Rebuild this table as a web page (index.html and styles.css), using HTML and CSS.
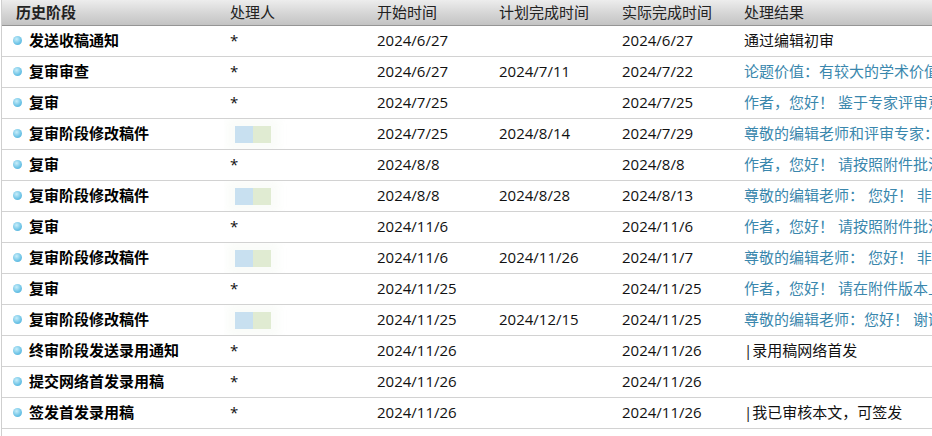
FILE: index.html
```html
<!DOCTYPE html>
<html lang="zh-CN">
<head>
    <meta charset="UTF-8">
    <title>稿件处理历史</title>
    <link rel="stylesheet" href="styles.css">
</head>
<body>
    <div class="wrap">
        <table class="history">
            <colgroup>
                <col class="c-stage">
                <col class="c-user">
                <col class="c-start">
                <col class="c-plan">
                <col class="c-done">
                <col class="c-result">
            </colgroup>
            <thead>
                <tr>
                    <th class="stage-head">历史阶段</th>
                    <th>处理人</th>
                    <th>开始时间</th>
                    <th>计划完成时间</th>
                    <th>实际完成时间</th>
                    <th>处理结果</th>
                </tr>
            </thead>
            <tbody>
                <tr>
                    <td class="stage"><span class="dot"></span>发送收稿通知</td>
                    <td>*</td>
                    <td>2024/6/27</td>
                    <td></td>
                    <td>2024/6/27</td>
                    <td>通过编辑初审</td>
                </tr>
                <tr>
                    <td class="stage"><span class="dot"></span>复审审查</td>
                    <td>*</td>
                    <td>2024/6/27</td>
                    <td>2024/7/11</td>
                    <td>2024/7/22</td>
                    <td class="note">论题价值：有较大的学术价值和现实意义</td>
                </tr>
                <tr>
                    <td class="stage"><span class="dot"></span>复审</td>
                    <td>*</td>
                    <td>2024/7/25</td>
                    <td></td>
                    <td>2024/7/25</td>
                    <td class="note">作者，您好！ 鉴于专家评审意见，请修改</td>
                </tr>
                <tr>
                    <td class="stage"><span class="dot"></span>复审阶段修改稿件</td>
                    <td><span class="masked"></span></td>
                    <td>2024/7/25</td>
                    <td>2024/8/14</td>
                    <td>2024/7/29</td>
                    <td class="note">尊敬的编辑老师和评审专家：您好</td>
                </tr>
                <tr>
                    <td class="stage"><span class="dot"></span>复审</td>
                    <td>*</td>
                    <td>2024/8/8</td>
                    <td></td>
                    <td>2024/8/8</td>
                    <td class="note">作者，您好！ 请按照附件批注修改</td>
                </tr>
                <tr>
                    <td class="stage"><span class="dot"></span>复审阶段修改稿件</td>
                    <td><span class="masked"></span></td>
                    <td>2024/8/8</td>
                    <td>2024/8/28</td>
                    <td>2024/8/13</td>
                    <td class="note">尊敬的编辑老师： 您好！ 非常感谢</td>
                </tr>
                <tr>
                    <td class="stage"><span class="dot"></span>复审</td>
                    <td>*</td>
                    <td>2024/11/6</td>
                    <td></td>
                    <td>2024/11/6</td>
                    <td class="note">作者，您好！ 请按照附件批注修改</td>
                </tr>
                <tr>
                    <td class="stage"><span class="dot"></span>复审阶段修改稿件</td>
                    <td><span class="masked"></span></td>
                    <td>2024/11/6</td>
                    <td>2024/11/26</td>
                    <td>2024/11/7</td>
                    <td class="note">尊敬的编辑老师： 您好！ 非常感谢</td>
                </tr>
                <tr>
                    <td class="stage"><span class="dot"></span>复审</td>
                    <td>*</td>
                    <td>2024/11/25</td>
                    <td></td>
                    <td>2024/11/25</td>
                    <td class="note">作者，您好！ 请在附件版本上修改</td>
                </tr>
                <tr>
                    <td class="stage"><span class="dot"></span>复审阶段修改稿件</td>
                    <td><span class="masked"></span></td>
                    <td>2024/11/25</td>
                    <td>2024/12/15</td>
                    <td>2024/11/25</td>
                    <td class="note">尊敬的编辑老师：您好！ 谢谢您</td>
                </tr>
                <tr>
                    <td class="stage"><span class="dot"></span>终审阶段发送录用通知</td>
                    <td>*</td>
                    <td>2024/11/26</td>
                    <td></td>
                    <td>2024/11/26</td>
                    <td>|录用稿网络首发</td>
                </tr>
                <tr>
                    <td class="stage"><span class="dot"></span>提交网络首发录用稿</td>
                    <td>*</td>
                    <td>2024/11/26</td>
                    <td></td>
                    <td>2024/11/26</td>
                    <td></td>
                </tr>
                <tr>
                    <td class="stage"><span class="dot"></span>签发首发录用稿</td>
                    <td>*</td>
                    <td>2024/11/26</td>
                    <td></td>
                    <td>2024/11/26</td>
                    <td>|我已审核本文，可签发</td>
                </tr>
            </tbody>
        </table>
    </div>
</body>
</html>
```

FILE: styles.css
```css
* {
    margin: 0;
    padding: 0;
    box-sizing: border-box;
}
html, body {
    height: 100%;
    overflow: hidden;
    background: #fff;
}
body {
    font-family: "Open Sans", "Noto Sans CJK SC", sans-serif;
    font-size: 15px;
    color: #111;
}
.wrap {
    height: 100%;
    border-left: 1px solid #cfcfcf;
    margin-left: 1px;
}
.history {
    border-collapse: collapse;
    table-layout: fixed;
    width: 1300px;
}
.c-stage { width: 222px; }
.c-user { width: 147px; }
.c-start { width: 122px; }
.c-plan { width: 123px; }
.c-done { width: 122px; }
.c-result { width: 564px; }
.history th {
    height: 25px;
    padding: 0 0 1px 6px;
    text-align: left;
    font-weight: normal;
    color: #222;
    line-height: 22px;
    vertical-align: middle;
    background: linear-gradient(#ededed, #d9d9d9 45%, #c3c3c3);
    border-bottom: 1px solid #959595;
}
.history th.stage-head {
    font-weight: bold;
    padding-left: 14px;
}
.history td {
    height: 31px;
    padding: 0 0 2px 6px;
    border-bottom: 1px solid #d2d2d2;
    white-space: nowrap;
    overflow: hidden;
    vertical-align: middle;
}
.history td.stage {
    font-weight: bold;
    color: #000;
    padding-left: 11px;
}
.dot {
    display: inline-block;
    width: 9px;
    height: 9px;
    margin-right: 7px;
    border-radius: 50%;
    vertical-align: 1px;
    background: radial-gradient(circle at 40% 35%, #c9eefa, #6cc3e6 60%, #4aa9d6);
}
.history td.note {
    color: #3a87ad;
}
.masked {
    display: inline-block;
    width: 36px;
    height: 17px;
    margin-left: 5px;
    vertical-align: -4px;
    background: linear-gradient(90deg, #c8e0f0 50%, #e0ebd2 50%);
    filter: blur(0.6px);
    box-shadow: 0 0 8px 8px rgba(250, 252, 248, 0.9);
}
```
